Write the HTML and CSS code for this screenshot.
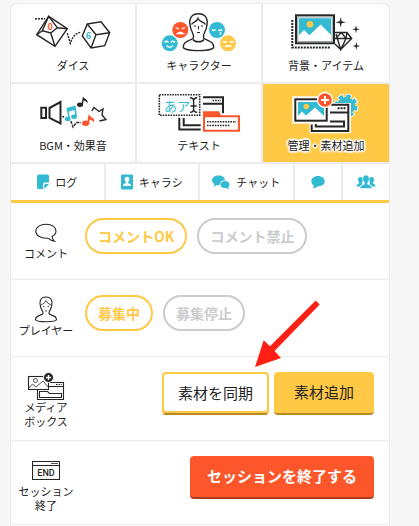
FILE: index.html
```html
<!DOCTYPE html>
<html lang="ja">
<head>
    <meta charset="UTF-8">
    <meta name="viewport" content="width=device-width, initial-scale=1.0">
    <title>セッション管理</title>
    <link rel="stylesheet" href="styles.css">
</head>
<body>
    <main class="panel">
        <nav class="categories">
            <button class="category" type="button">
                <svg class="category-icon" viewBox="0 0 88 40" aria-hidden="true">
                    <g class="line">
                        <path d="M19.7 4.3 38.3 16.7 26 34.3 7.7 22.7Z"/>
                        <path d="M19.7 4.3 28.3 15.7 21.7 21 13.3 18.7ZM7.7 22.7 13.3 18.7M28.3 15.7 38.3 16.7M21.7 21 26 34.3"/>
                        <path d="M58.3 12 72 9.7 80.7 20.7 75.7 33.7 62 36 53.3 24ZM58.3 12 67 22.7 80.7 20.7M67 22.7 62 36"/>
                        <path stroke-dasharray="2 1" d="M6 6.7H16M38.3 21.3 41.3 31.3C43 26 46 21 51.7 20.3"/>
                    </g>
                    <text class="die-number red" x="18.6" y="17.6">0</text>
                    <text class="die-number cyan" x="56.8" y="27.2">6</text>
                </svg>
                <span>ダイス</span>
            </button>
            <button class="category" type="button">
                <svg class="category-icon" viewBox="0 0 88 40" aria-hidden="true">
                    <circle class="red" cx="25.3" cy="18" r="8"/>
                    <circle class="cyan" cx="14.7" cy="31.3" r="8"/>
                    <circle class="cyan" cx="62" cy="18" r="8"/>
                    <circle class="yellow" cx="73" cy="31.3" r="8"/>
                    <g fill="none" stroke="#fff" stroke-width="1.3">
                        <path d="M20.5 15.5 24 17M30 15.5 26.5 17M22.5 21.5Q25.3 19.5 28.3 21.5Z"/>
                        <path d="M9.5 30.5Q11.5 28 13.5 30.5M16 30.5Q18 28 20 30.5M11.5 33.5Q14.7 37 18 33.5"/>
                        <path d="M57 17.5Q58.5 19.5 60.5 17.5M63.5 17.5Q65 19.5 67 17.5M65.5 20V23"/>
                        <path d="M67.5 30H72M74.5 30H79M70 33.5Q71.5 35.5 73 33.5Q74.5 35.5 76.5 33.5"/>
                    </g>
                    <path class="line" fill="#fff" d="M38.5 25.5C39 21 36 20 35.2 14C33.5 6 37 1.7 43.5 1.7S53.5 6 51.8 14C51 20 48 21 48.5 25.5C49 29 58.7 27.5 58.7 35C58.7 39.8 28.3 39.8 28.3 35C28.3 27.5 38 29 38.5 25.5Z"/>
                    <path class="line" d="M36.5 12.5C37.5 10 42 10 43 6.5C44.5 10 49 10 50.5 12.5M38 27.5C40 30.5 47 30.5 49 27.5"/>
                    <path class="line thin" d="M39 14H41M46 14H48M43.5 14V17.5M42 20.5H45"/>
                </svg>
                <span>キャラクター</span>
            </button>
            <button class="category" type="button">
                <svg class="category-icon" viewBox="0 0 88 40" aria-hidden="true">
                    <path class="line dots" d="M10.3 8V35.5H48"/>
                    <rect class="frame" x="14" y="3.3" width="38" height="28"/>
                    <rect class="frame-inner" x="15.8" y="5" width="34.4" height="24.6"/>
                    <path class="cyan" d="M17 6.3H49V23L38.7 12.5 27.3 23.3 22 18 17 23Z"/>
                    <circle class="yellow" cx="28" cy="12.3" r="3.2"/>
                    <path class="line" d="M53 20.5H65L69.7 26.5 58.7 37.5 53 32M53 26.5H69.7M54 22 58.7 37.5 64 26.5 59.5 20.5 54 26M64 26.5 65 20.5"/>
                    <path class="dark" d="M58.7 5 59.7 9.3 64 10.3 59.7 11.3 58.7 15.6 57.7 11.3 53.4 10.3 57.7 9.3ZM74 13.3 74.8 16.5 78 17.3 74.8 18.1 74 21.3 73.2 18.1 70 17.3 73.2 16.5ZM74.3 30 75.1 33.2 78.3 34 75.1 34.8 74.3 38 73.5 34.8 70.3 34 73.5 33.2Z"/>
                </svg>
                <span>背景・アイテム</span>
            </button>
            <button class="category" type="button">
                <svg class="category-icon" viewBox="0 0 88 40" aria-hidden="true">
                    <g class="line">
                        <path stroke-width="2" d="M12.3 15.8H17V26H12.3ZM20.5 16 31.5 10V31.5L20.5 26Z"/>
                        <path stroke-dasharray="3 1" d="M41.8 29 44 35 47.5 30.5H52"/>
                        <path d="M62.8 19 65 15.5 70 19.5 74 17 73 23 77 27.5 70.5 29"/>
                    </g>
                    <circle class="dark" cx="34.3" cy="24.7" r="1"/>
                    <g class="cyan">
                        <ellipse cx="38.7" cy="27" rx="2.8" ry="2.2"/>
                        <ellipse cx="45" cy="24.8" rx="2.8" ry="2.2"/>
                        <path d="M37.5 16 46.5 13.5 48 24.5 46.4 25 45.4 18 39.6 19.7 41.2 26.5 39.6 27Z"/>
                    </g>
                    <g class="dark">
                        <ellipse cx="51" cy="12.7" rx="3" ry="2.2"/>
                        <path d="M54 4.5C55 7 59.5 7 58.5 11.5C58 9.5 55 9 54.6 8.3L54 13 52.4 12Z"/>
                    </g>
                    <g class="red">
                        <ellipse cx="56.6" cy="31.2" rx="3.6" ry="2.7"/>
                        <path d="M59.5 22.3C61 25.5 66.5 25.5 65 30.5C64 28.5 61.5 28 60.8 27.5L60 32 58.2 31Z"/>
                    </g>
                </svg>
                <span>BGM・効果音</span>
            </button>
            <button class="category" type="button">
                <svg class="category-icon" viewBox="0 0 88 40" aria-hidden="true">
                    <rect class="line dots-fine" x="4.3" y="2.8" width="40.4" height="20.4"/>
                    <text class="sample-text cyan" x="9" y="18.5">あア</text>
                    <path class="line" d="M35 5.7C37 5.7 38.6 7 38.6 9V17C38.6 19 37 20.3 35 20.3M42.2 5.7C40.2 5.7 38.6 7 38.6 9M42.2 20.3C40.2 20.3 38.6 19 38.6 17M35.5 14H41.7"/>
                    <path class="line heavy" d="M48 5.3H68V21.3M48 11.7H68M24.3 25.7V37.5H45.7M28.7 26V33.3H45.7"/>
                    <path class="line dots-fine" d="M57.5 8.5H66"/>
                    <path fill="#fff" stroke="#fd562b" stroke-width="2" d="M49 24.3H84V38.7H49Z"/>
                    <path class="red" d="M48 19.3H64L66 23.5V25H48Z"/>
                    <path class="line dots-fine" d="M52 29.7H81M52 33.5H75"/>
                </svg>
                <span>テキスト</span>
            </button>
            <button class="category active" type="button" aria-current="page">
                <svg class="category-icon" viewBox="0 0 88 40" aria-hidden="true">
                    <g fill="none">
                        <circle cx="64" cy="14" r="10" stroke="#fff" stroke-width="5" stroke-dasharray="6 1.85" stroke-dashoffset=".75"/>
                        <circle cx="64" cy="14" r="10" stroke="#31bad1" stroke-width="3" stroke-dasharray="4.5 3.35"/>
                    </g>
                    <circle class="cyan" cx="64" cy="14" r="9"/>
                    <path fill="#fff" d="M28 11H69V41.3H27.5V29Z"/>
                    <rect x="10.3" y="4.3" width="37.3" height="27.3" fill="#fff"/>
                    <path class="line heavy" d="M48 12.7H66.3V39H29.7V32.5M48 20.5H66.3M33.8 32V34.5H62V29.5H48"/>
                    <path class="line dots" d="M55.5 16.3H64"/>
                    <rect class="line heavy" x="13.3" y="7.3" width="31.4" height="21.4"/>
                    <path class="cyan" d="M16 10H42V24L33 15.5 24 23.5 20 19.5 16 24Z"/>
                    <circle class="yellow" cx="24.3" cy="14.5" r="2.7"/>
                    <circle cx="43" cy="8" r="7.5" fill="#fd562b" stroke="#fff" stroke-width="1.3"/>
                    <path d="M43 4V12M39 8H47" stroke="#fff" stroke-width="2"/>
                </svg>
                <span>管理・素材追加</span>
            </button>
        </nav>

        <nav class="tabs">
            <button class="tab wide" type="button">
                <svg width="12" height="16" viewBox="0 0 12 16" aria-hidden="true">
                    <path class="cyan" d="M1.5 .5H10.5Q12 .5 12 2V8.5H8Q6 8.5 6 10.5V15H1.5Q0 15 0 13.5V2Q0 .5 1.5 .5ZM7.3 15V11Q7.3 10 8.3 10H12Z"/>
                </svg>
                <span>ログ</span>
            </button>
            <button class="tab wide" type="button">
                <svg width="12" height="16" viewBox="0 0 12 16" aria-hidden="true">
                    <rect class="cyan" y=".5" width="12" height="15" rx="1"/>
                    <path fill="#fff" d="M6 2.7C8 2.7 8.6 4 8.2 6C8 7.3 7 7.7 7 8.7C7.3 9.7 10 9.5 10 12H2C2 9.5 4.7 9.7 5 8.7C5 7.7 4 7.3 3.8 6C3.4 4 4 2.7 6 2.7Z"/>
                </svg>
                <span>キャラシ</span>
            </button>
            <button class="tab wide" type="button">
                <svg width="18" height="16" viewBox="0 0 18 16" aria-hidden="true">
                    <path class="cyan" d="M6.5 1.5C10 1.5 13 3.5 13 6Q8 6.5 7.5 11Q6 11.5 4.5 11Q3 12.5 1.5 12.5L2.5 10Q0 8.5 0 6.5C0 3.5 3 1.5 6.5 1.5Z"/>
                    <path class="cyan" d="M13 7C15.5 7 17.5 8.5 17.5 10.5Q17.5 12 16 13.2L17 15.2Q15 15 14.2 14Q8.5 14.5 8.5 10.5C8.5 8.5 10.5 7 13 7Z"/>
                </svg>
                <span>チャット</span>
            </button>
            <button class="tab" type="button" aria-label="吹き出し">
                <svg width="14" height="16" viewBox="0 0 14 16" aria-hidden="true">
                    <path class="cyan" d="M7 2C11 2 13.7 4.3 13.7 7.3S11 12.5 6.5 12.5Q4 14.5 2 14.5L3 11.7Q.3 10 .3 7.3C.3 4.3 3 2 7 2Z"/>
                </svg>
            </button>
            <button class="tab" type="button" aria-label="メンバー">
                <svg width="20" height="16" viewBox="0 0 20 16" aria-hidden="true">
                    <path class="cyan" d="M4.5 3Q7 3 7 5.5Q7 7.5 6 8.5V9.5L7 10Q4 11 4 12.5H.5Q.5 10.5 3 9.5V8.5Q2 7.5 2 5.5Q2 3 4.5 3ZM15.5 3Q18 3 18 5.5Q18 7.5 17 8.5V9.5Q19.5 10.5 19.5 12.5H16Q16 11 13 10L14 9.5V8.5Q13 7.5 13 5.5Q13 3 15.5 3Z"/>
                    <path fill="#31bad1" stroke="#fff" stroke-width=".6" d="M10 1Q13.3 1 13.3 4.5Q13.3 7.5 11.7 8.7V10.2Q16 11.3 16 14.5H4Q4 11.3 8.3 10.2V8.7Q6.7 7.5 6.7 4.5Q6.7 1 10 1Z"/>
                </svg>
            </button>
        </nav>

        <section class="setting">
            <h2 class="setting-label">
                <span class="setting-icon">
                    <svg width="24" height="20" viewBox="0 0 24 20" aria-hidden="true">
                        <path class="line" d="M12 1.2C18 1.2 22 4 22 8Q22 11.5 18 13.5Q18.5 16.5 20.5 18.3Q16.5 17.5 14 15.2C7 15.8 1.8 12.5 1.8 8.5C1.8 4 6.5 1.2 12 1.2Z"/>
                    </svg>
                </span>
                コメント
            </h2>
            <div class="choices">
                <button class="pill selected" type="button" aria-pressed="true">コメントOK</button>
                <button class="pill" type="button" aria-pressed="false">コメント禁止</button>
            </div>
        </section>

        <section class="setting">
            <h2 class="setting-label">
                <span class="setting-icon">
                    <svg width="24" height="27" viewBox="0 0 24 27" aria-hidden="true">
                        <path class="line" d="M9 17.5Q9 15 7.5 13.5C4.5 6 6 1 12 1S19.500 6 16.500 13.500Q15 15 15 17.500C15.500 19.500 22.500 19 22.500 23.500C22.500 26.500 1.500 26.500 1.500 23.500C1.500 19 8.500 19.500 9 17.500Z"/>
                        <path class="line thin" d="M7 9Q11 7.5 12 4.5Q13 7.5 17 9M9 10.5H10.5M13.5 10.5H15M11 15H13"/>
                    </svg>
                </span>
                プレイヤー
            </h2>
            <div class="choices">
                <button class="pill selected" type="button" aria-pressed="true">募集中</button>
                <button class="pill" type="button" aria-pressed="false">募集停止</button>
            </div>
        </section>

        <section class="setting">
            <h2 class="setting-label">
                <span class="setting-icon">
                    <svg width="38" height="29" viewBox="0 0 38 29" aria-hidden="true">
                        <path class="line" d="M22 10.5H36.5V27.5H10.5V17M22 14.5H36.5M12.5 25.5V19.5H20.5L22.500 21.500H34.500V25.500H12.500Z"/>
                        <path class="line dots-fine" d="M29 12.5H35"/>
                        <rect class="line" x="1.5" y="4.5" width="20" height="13" fill="#fff"/>
                        <circle class="line thin" cx="8.5" cy="8.5" r="2"/>
                        <path class="line thin" d="M2 16 5.5 12 9 15 16 9 21.5 15.5"/>
                        <circle cx="21.5" cy="5.5" r="5" fill="#262626" stroke="#fff"/>
                        <path d="M21.5 3V8M19 5.5H24" stroke="#fff" stroke-width="1.3"/>
                    </svg>
                </span>
                メディア<br>ボックス
            </h2>
            <div class="actions">
                <button class="btn btn-outline" type="button">素材を同期</button>
                <button class="btn btn-primary" type="button">素材追加</button>
                <svg class="pointer" viewBox="0 0 68 70" aria-hidden="true">
                    <path d="M1 68 9.7 41.3 16 47.3 61.7 1.5 65.7 5.5 20.5 52 27 59Z"/>
                </svg>
            </div>
        </section>

        <section class="setting">
            <h2 class="setting-label">
                <span class="setting-icon">
                    <svg width="28" height="19" viewBox="0 0 28 19" aria-hidden="true">
                        <path class="line" d="M.5 .5H27.5V18.5H.5ZM.5 4.500H27.500"/>
                        <path class="line thin" d="M19 2.5H26"/>
                        <text class="end-text" x="14" y="15">END</text>
                    </svg>
                </span>
                セッション<br>終了
            </h2>
            <div class="actions">
                <button class="btn btn-danger" type="button">セッションを終了する</button>
            </div>
        </section>
    </main>
</body>
</html>
```
FILE: styles.css
```css
* {
    box-sizing: border-box;
}

body {
    margin: 0;
    padding: 4px 30px 0 11px;
    background-color: #f7f7f7;
    color: #222;
    font-family: "Noto Sans CJK JP", sans-serif;
}

button {
    margin: 0;
    border: none;
    color: inherit;
    font-family: inherit;
    cursor: pointer;
}

.panel {
    min-height: calc(100vh - 4px);
    background-color: white;
    border-radius: 6px 6px 0 0;
    box-shadow: 0 0 0 1px #ebebeb;
}

/* Category grid */
.categories {
    display: grid;
    grid-template-columns: 62fr 62fr 63fr;
    gap: 2px;
    background-color: #ebebeb;
    border-bottom: 2px solid #ebebeb;
    border-radius: 6px 6px 0 0;
    overflow: hidden;
}

.category {
    display: flex;
    flex-direction: column;
    align-items: center;
    gap: 6px;
    padding: 8px 0 10px;
    background-color: white;
    font-size: 11px;
    line-height: 14px;
}

.category-icon {
    width: 88px;
    height: 40px;
    overflow: visible;
}

.category.active {
    background-color: #ffc845;
}

.category.active span {
    text-shadow: 1px 1px 1px white, -1px -1px 1px white, 1px -1px 1px white, -1px 1px 1px white,
        2px 0 1px white, -2px 0 1px white, 0 2px 1px white, 0 -2px 1px white;
}

/* Icon colours and strokes */
.red {
    fill: #fd562b;
}

.cyan {
    fill: #31bad1;
}

.yellow {
    fill: #ffc845;
}

.dark {
    fill: #262626;
}

.line {
    fill: none;
    stroke: #262626;
    stroke-width: 1.4;
}

.line[fill] {
    fill: white;
}

.thin {
    stroke-width: 1;
}

.heavy {
    stroke-width: 2;
}

.dots {
    stroke-width: 2;
    stroke-dasharray: 2 1;
}

.dots-fine {
    stroke-width: 1.6;
    stroke-dasharray: 1.6 1;
}

.frame {
    fill: white;
    stroke: #262626;
    stroke-width: 2;
}

.frame-inner {
    fill: none;
    stroke: #8c9a94;
    stroke-width: 1;
}

.die-number {
    font-size: 9px;
    font-weight: bold;
}

.sample-text {
    font-size: 13px;
}

.end-text {
    fill: #262626;
    font-family: Roboto, sans-serif;
    font-size: 9px;
    font-weight: 500;
    text-anchor: middle;
}

/* Tabs */
.tabs {
    display: flex;
    gap: 2px;
    background-color: #ebebeb;
    border-bottom: 3px solid #ffc845;
}

.tab {
    flex: 1 1 0;
    display: flex;
    align-items: center;
    justify-content: center;
    gap: 6px;
    height: 36px;
    padding: 0;
    background-color: white;
    font-size: 11px;
}

.tab.wide {
    flex-grow: 2;
}

/* Settings rows */
.setting {
    display: flex;
    align-items: flex-start;
    min-height: 77px;
    padding: 15px 15px 11px 0;
    border-bottom: 1px solid #ebebeb;
}

.setting-label {
    flex: none;
    width: 70px;
    margin: 0;
    font-family: "Liberation Sans", "Noto Sans CJK JP", sans-serif;
    font-size: 11px;
    font-weight: normal;
    line-height: 14px;
    text-align: center;
}

.setting-icon {
    display: flex;
    align-items: center;
    justify-content: center;
    height: 29px;
}

.setting-icon .line {
    stroke-width: 1.1;
}

.setting-icon .thin {
    stroke-width: 0.8;
}

.choices {
    display: flex;
    flex-wrap: wrap;
    gap: 10px;
    margin-left: 4px;
}

.pill {
    height: 36px;
    padding: 0 11px;
    background-color: white;
    border: 2px solid #ccc;
    border-radius: 18px;
    color: #ccc;
    font-size: 14px;
    font-weight: bold;
}

.pill.selected {
    border-color: #ffc845;
    color: #ffc845;
}

.actions {
    position: relative;
    display: flex;
    gap: 5px;
    margin-left: auto;
}

.btn {
    height: 43px;
    padding: 0 16px 2px;
    border-radius: 4px;
    font-size: 15px;
}

.btn-outline {
    padding: 0 14px 2px;
    background-color: white;
    border: 2px solid #ffc845;
    box-shadow: inset 0 -2px #ffc845;
    border-bottom-color: #b88a22;
}

.btn-primary {
    min-width: 100px;
    background-color: #ffc845;
    border-bottom: 2px solid #b88a22;
}

.btn-danger {
    padding: 0 17px 2px;
    background-color: #fd562b;
    border-bottom: 2px solid #a83a1e;
    color: white;
    font-weight: bold;
}

/* Arrow drawn over the sync button */
.pointer {
    position: absolute;
    right: 52px;
    bottom: 46px;
    width: 68px;
    height: 70px;
    fill: #ff2015;
    pointer-events: none;
}
```
